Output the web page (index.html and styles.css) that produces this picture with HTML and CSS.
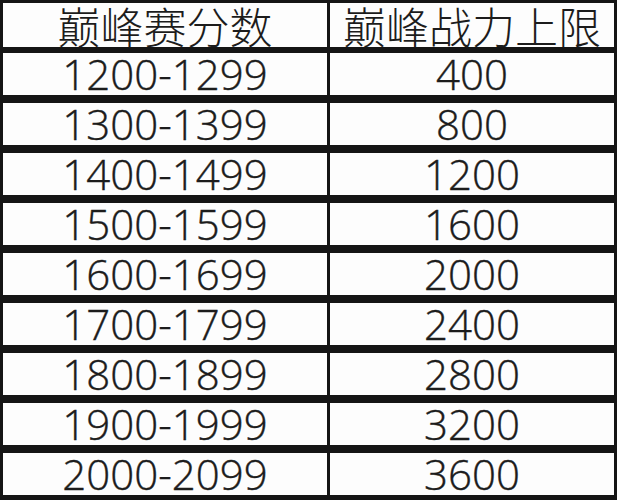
FILE: index.html
```html
<!DOCTYPE html>
<html lang="zh">
<head>
<meta charset="utf-8">
<link rel="stylesheet" href="styles.css">
</head>
<body>
<div class="table">
  <div class="cell head">巅峰赛分数</div><div class="cell head">巅峰战力上限</div>
  <div class="cell">1200-1299</div><div class="cell">400</div>
  <div class="cell">1300-1399</div><div class="cell">800</div>
  <div class="cell">1400-1499</div><div class="cell">1200</div>
  <div class="cell">1500-1599</div><div class="cell">1600</div>
  <div class="cell">1600-1699</div><div class="cell">2000</div>
  <div class="cell">1700-1799</div><div class="cell">2400</div>
  <div class="cell">1800-1899</div><div class="cell">2800</div>
  <div class="cell">1900-1999</div><div class="cell">3200</div>
  <div class="cell">2000-2099</div><div class="cell">3600</div>
</div>
</body>
</html>
```
FILE: styles.css
```css
html, body {
  margin: 0;
  padding: 0;
  background: #fff;
}
.table {
  width: 617px;
  height: 500px;
  box-sizing: border-box;
  background: #151515;
  padding: 2px 3px 3px 3px;
  display: grid;
  grid-template-columns: 324px 284px;
  grid-template-rows: 45px repeat(9, 47px);
  column-gap: 3px;
  row-gap: 3px;
}
.cell {
  background: #fdfdfd;
  color: #1c1c1c;
  font-family: "Open Sans", "Noto Sans CJK SC", sans-serif;
  font-weight: 300;
  font-size: 42px;
  line-height: 42px;
  height: 42px;
  align-self: center;
  text-align: center;
  -webkit-text-stroke: 0.4px #1c1c1c;
}
.head {
  font-family: "Noto Sans CJK SC", sans-serif;
  font-size: 43px;
  line-height: 44px;
  height: 44px;
  -webkit-text-stroke: 0;
}
```
